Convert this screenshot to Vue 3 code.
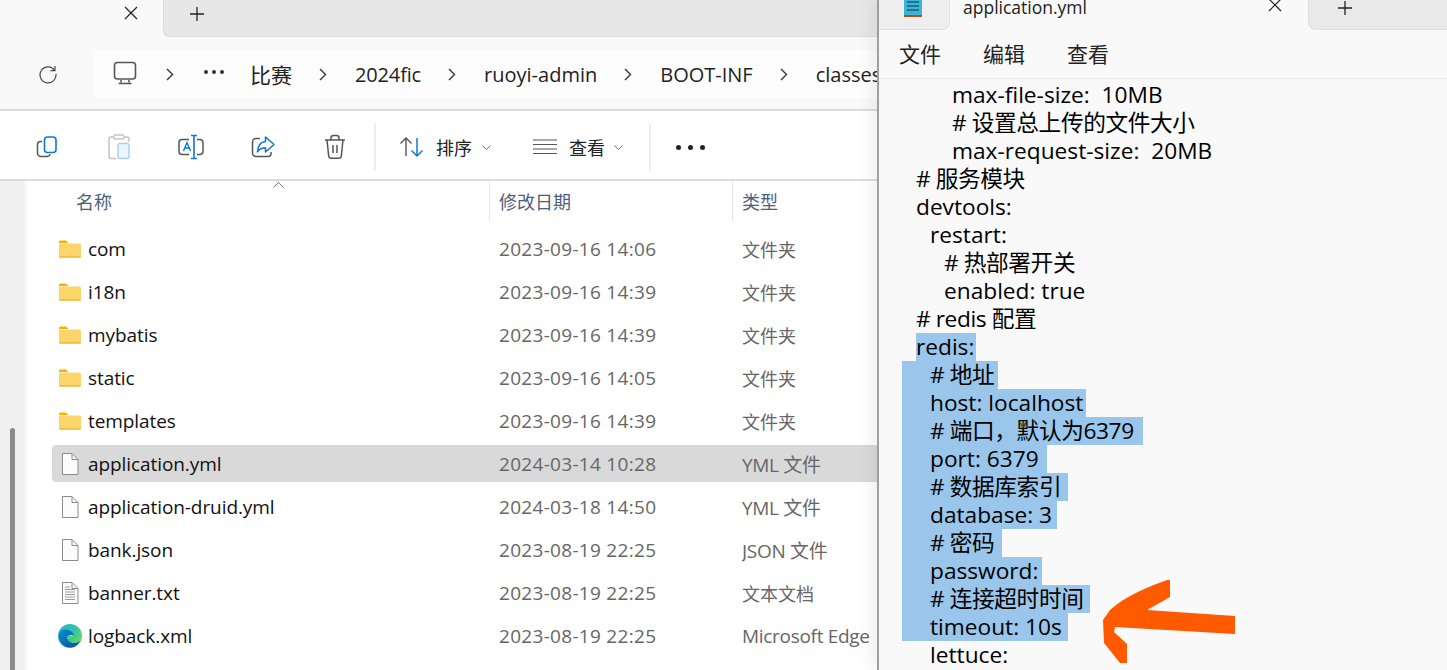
<script setup>
const crumbs = [
  { t: '比赛', cls: 'c1' },
  { t: '2024fic', cls: 'c2' },
  { t: 'ruoyi-admin', cls: 'c3' },
  { t: 'BOOT-INF', cls: 'c4' }
]
const files = [
  { n: 'com', d: '2023-09-16 14:06', k: '文件夹', i: 'folder' },
  { n: 'i18n', d: '2023-09-16 14:39', k: '文件夹', i: 'folder' },
  { n: 'mybatis', d: '2023-09-16 14:39', k: '文件夹', i: 'folder' },
  { n: 'static', d: '2023-09-16 14:05', k: '文件夹', i: 'folder' },
  { n: 'templates', d: '2023-09-16 14:39', k: '文件夹', i: 'folder' },
  { n: 'application.yml', d: '2024-03-14 10:28', k: 'YML 文件', i: 'file', sel: true },
  { n: 'application-druid.yml', d: '2024-03-18 14:50', k: 'YML 文件', i: 'file' },
  { n: 'bank.json', d: '2023-08-19 22:25', k: 'JSON 文件', i: 'file' },
  { n: 'banner.txt', d: '2023-08-19 22:25', k: '文本文档', i: 'txt' },
  { n: 'logback.xml', d: '2023-08-19 22:25', k: 'Microsoft Edge', i: 'edge' }
]
const lines = [
  { t: 'max-file-size:  10MB', x: 50 },
  { t: '# 设置总上传的文件大小', x: 50 },
  { t: 'max-request-size:  20MB', x: 50 },
  { t: '# 服务模块', x: 14 },
  { t: 'devtools:', x: 14 },
  { t: 'restart:', x: 28 },
  { t: '# 热部署开关', x: 42 },
  { t: 'enabled: true', x: 42 },
  { t: '# redis 配置', x: 14 },
  { t: 'redis:', x: 14, end: 74 },
  { t: '# 地址', x: 28, start: 0, end: 96 },
  { t: 'host: localhost', x: 28, start: 0, end: 184 },
  { t: '# 端口，默认为6379', x: 28, start: 0, end: 241 },
  { t: 'port: 6379', x: 28, start: 0, end: 145 },
  { t: '# 数据库索引', x: 28, start: 0, end: 166 },
  { t: 'database: 3', x: 28, start: 0, end: 155 },
  { t: '# 密码', x: 28, start: 0, end: 100 },
  { t: 'password:', x: 28, start: 0, end: 140 },
  { t: '# 连接超时时间', x: 28, start: 0, end: 188 },
  { t: 'timeout: 10s', x: 28, start: 0, end: 166 },
  { t: 'lettuce:', x: 28 }
]
function lineStyle(l) {
  return { paddingLeft: l.x + 'px' }
}
function selStyle(l) {
  const s = l.start === 0 ? 0 : l.x
  return { left: s + 'px', width: l.end - s + 'px' }
}
function hasCjk(t) {
  return /[\u4e00-\u9fff]/.test(t)
}
function onlyCjk(t) {
  return /^[\u4e00-\u9fff]+$/.test(t)
}
</script>

<template>
  <div class="screen">
    <section class="explorer">
      <div class="tabstrip">
        <div class="tab-active">
          <svg class="x" width="14" height="14" viewBox="0 0 14 14"><path d="M1 1l12 12M13 1L1 13" stroke="#222" stroke-width="1.2" fill="none"/></svg>
        </div>
        <div class="tab-rest">
          <svg class="plus" width="16" height="16" viewBox="0 0 16 16"><path d="M8 1v14M1 8h14" stroke="#222" stroke-width="1.3" fill="none"/></svg>
        </div>
      </div>

      <div class="navbar">
        <svg class="refresh" width="20" height="20" viewBox="0 0 20 20"><path d="M16.5 6.2A8 8 0 1 0 18 10" fill="none" stroke="#444" stroke-width="1.2"/><path d="M17 2v4.6h-4.6" fill="none" stroke="#444" stroke-width="1.2"/></svg>
        <div class="address">
          <svg class="pc" width="24" height="24" viewBox="0 0 24 24"><rect x="1.5" y="1.5" width="21" height="16.5" rx="3" fill="none" stroke="#555" stroke-width="1.6"/><path d="M8 19v2.5M16 19v2.5M5.5 22.5h13" stroke="#555" stroke-width="1.5" fill="none"/></svg>
          <svg class="chev first" width="8" height="13" viewBox="0 0 8 13"><path d="M1 1l5.5 5.500L1 12" fill="none" stroke="#333" stroke-width="1.4"/></svg>
          <span class="dots"><i></i><i></i><i></i></span>
          <template v-for="c in crumbs" :key="c.t">
            <span class="crumb" :class="c.cls">{{ c.t }}</span>
            <svg class="chev" width="8" height="13" viewBox="0 0 8 13"><path d="M1 1l5.5 5.500L1 12" fill="none" stroke="#333" stroke-width="1.4"/></svg>
          </template>
          <span class="crumb">classes</span>
        </div>
      </div>

      <div class="cmdbar">
        <button class="cmd">
          <svg width="26" height="26" viewBox="0 0 26 26"><rect x="10.5" y="3" width="11.5" height="15.5" rx="3" fill="none" stroke="#0f78d4" stroke-width="1.6"/><path d="M8 7.5H6.5a3 3 0 0 0-3 3V19a3.5 3.5 0 0 0 3.5 3.5h6a3 3 0 0 0 3-2.5" fill="none" stroke="#555" stroke-width="1.5"/></svg>
        </button>
        <button class="cmd">
          <svg width="26" height="28" viewBox="0 0 26 28"><path d="M8 4H5a2 2 0 0 0-2 2v17a2.5 2.5 0 0 0 2.5 2.5H10M18 4h3a2 2 0 0 1 2 2v3" fill="none" stroke="#c4c4c4" stroke-width="1.5"/><rect x="8" y="2" width="10" height="4" rx="1.5" fill="none" stroke="#c4c4c4" stroke-width="1.4"/><rect x="12" y="10.5" width="11" height="15" rx="2" fill="#eef6fd" stroke="#a6d1f3" stroke-width="1.5"/></svg>
        </button>
        <button class="cmd">
          <svg width="26" height="26" viewBox="0 0 26 26"><path d="M11 5.5H4a3 3 0 0 0-3 3v9a3 3 0 0 0 3 3h7M19 5.500h3a3 3 0 0 1 3 3v9a3 3 0 0 1-3 3h-3" fill="none" stroke="#555" stroke-width="1.5"/><path d="M5.500 17L9 8.500l3.500 8.500M6.800 14h4.400" fill="none" stroke="#0f78d4" stroke-width="1.4"/><path d="M13 1.500h6M13 24.500h6M16 1.500v23" fill="none" stroke="#0f78d4" stroke-width="1.6"/></svg>
        </button>
        <button class="cmd">
          <svg width="26" height="26" viewBox="0 0 26 26"><path d="M10 4.500H6a3.500 3.500 0 0 0-3.500 3.500v11A3.500 3.500 0 0 0 6 22.500h12a3 3 0 0 0 3-3V18" fill="none" stroke="#555" stroke-width="1.500"/><path d="M15.500 3l8.500 7.500-8.500 7.500v-4.200c-3.500 0-6 1-8 4 .3-5.500 3-9.800 8-10.300z" fill="#fff" stroke="#0f78d4" stroke-width="1.600" stroke-linejoin="round"/></svg>
        </button>
        <button class="cmd">
          <svg width="26" height="26" viewBox="0 0 26 26"><path d="M3 6h20M9 6V4a2.500 2.500 0 0 1 2.500-2.500h3A2.500 2.500 0 0 1 17 4v2M5 6l1.700 16a2.500 2.500 0 0 0 2.500 2.300h7.600a2.500 2.500 0 0 0 2.500-2.300L21 6M11 11v8M15 11v8" fill="none" stroke="#555" stroke-width="1.500"/></svg>
        </button>
        <span class="vsep s1"></span>
        <svg class="sort" width="26" height="22" viewBox="0 0 26 22"><path d="M7 20V2M1.500 7.500L7 2l5.500 5.500" fill="none" stroke="#555" stroke-width="1.400"/><path d="M18 2v18M12.500 14.500L18 20l5.500-5.500" fill="none" stroke="#0f78d4" stroke-width="1.500"/></svg>
        <span class="cmdtext sorttext">排序</span>
        <svg class="caret c-a" width="9" height="5" viewBox="0 0 9 5"><path d="M.5.5l4 4 4-4" fill="none" stroke="#777"/></svg>
        <svg class="lines" width="24" height="16" viewBox="0 0 24 16"><path d="M0 1h24M0 5.500h24M0 10h24M0 14.500h24" stroke="#555" stroke-width="1.200"/></svg>
        <span class="cmdtext viewtext">查看</span>
        <svg class="caret c-b" width="9" height="5" viewBox="0 0 9 5"><path d="M.5.5l4 4 4-4" fill="none" stroke="#777"/></svg>
        <span class="vsep s2"></span>
        <span class="more"><i></i><i></i><i></i></span>
      </div>

      <div class="body">
        <aside class="side"><div class="thumb"></div></aside>
        <div class="main">
          <svg class="sortup" width="11" height="6" viewBox="0 0 11 6"><path d="M.5 5.500l5-5 5 5" fill="none" stroke="#777"/></svg>
          <div class="thead">
            <span class="th th-n">名称</span>
            <span class="th th-d">修改日期</span>
            <span class="th th-k">类型</span>
          </div>
          <div class="rows">
            <div v-for="f in files" :key="f.n" class="row" :class="{ sel: f.sel }">
              <span class="ic">
                <svg v-if="f.i === 'folder'" width="22" height="18" viewBox="0 0 22 18"><path d="M0 2a1.500 1.500 0 0 1 1.500-1.500H7l2.500 2.500H0z" fill="#f5b400"/><path d="M0 3.500h20.500A1.500 1.500 0 0 1 22 5v11a1.500 1.500 0 0 1-1.500 1.500h-19A1.500 1.500 0 0 1 0 16z" fill="#fcd56a"/><path d="M0 16.500h22v0.000a1 1 0 0 1-1 1H1a1 1 0 0 1-1-1z" fill="#eaa715"/></svg>
                <svg v-else-if="f.i === 'file'" width="18" height="22" viewBox="0 0 18 22"><path d="M1.500.5H11L17 6.500v15H1.500z" fill="#fcfcfc" stroke="#8c8c8c"/><path d="M11 .5v6h6" fill="none" stroke="#8c8c8c"/></svg>
                <svg v-else-if="f.i === 'txt'" width="18" height="22" viewBox="0 0 18 22"><path d="M1.500.5H11L17 6.500v15H1.500z" fill="#fcfcfc" stroke="#8c8c8c"/><path d="M11 .5v6h6" fill="none" stroke="#8c8c8c"/><path d="M4 5h5M4 7.500h10M4 10h10M4 12.500h10M4 15h10M4 17.500h10" stroke="#9a9a9a"/></svg>
                <svg v-else width="24" height="24" viewBox="0 0 24 24">
                  <defs>
                    <linearGradient id="e1" x1="0" y1="0" x2="1" y2="0.700"><stop offset="0" stop-color="#1eb4d8"/><stop offset="0.600" stop-color="#35c1a5"/><stop offset="1" stop-color="#6fdc5b"/></linearGradient>
                    <linearGradient id="e2" x1="0" y1="0" x2="1" y2="1"><stop offset="0" stop-color="#0f8ad0"/><stop offset="1" stop-color="#0b4fa0"/></linearGradient>
                  </defs>
                  <circle cx="12" cy="12" r="12" fill="url(#e1)"/>
                  <path d="M1 10C2.500 5.500 8 4.500 12 6.500c2.500 1.300 4 3.500 3.500 5.500H9c-.5 3 1.500 6.500 6 7 3 .3 5-.5 7-2-2 4-6 7-11 6.500C4.500 23 0 17.500 1 10z" fill="url(#e2)"/>
                  <path d="M9 13.500c1-3 6.500-3 7.500-.5H9z" fill="#fff"/>
                  <path d="M9 12h6.500c.6 0 3-.3 3.500-2.500 1 3-1 5-3 5.500H9z" fill="#44d07e"/>
                </svg>
              </span>
              <span class="name">{{ f.n }}</span>
              <span class="date">{{ f.d }}</span>
              <span class="kind" :class="{ small: onlyCjk(f.k) }">{{ f.k }}</span>
            </div>
          </div>
        </div>
      </div>
    </section>

    <section class="notepad">
      <div class="np-tabs">
        <div class="np-left">
          <svg width="18" height="18" viewBox="0 0 18 18"><rect x="0" y="-2" width="18" height="17" fill="#3cb4d8"/><path d="M3 2h12M3 6h12M3 10h12" stroke="#14607c" stroke-width="1.600"/><rect x="0" y="15" width="18" height="2" fill="#b0500f"/></svg>
        </div>
        <div class="np-active">
          <span class="np-title">application.yml</span>
          <svg class="np-x" width="14" height="14" viewBox="0 0 14 14"><path d="M1 1l12 12M13 1L1 13" stroke="#222" stroke-width="1.200" fill="none"/></svg>
        </div>
        <div class="np-rest">
          <svg width="16" height="16" viewBox="0 0 16 16"><path d="M8 1v14M1 8h14" stroke="#222" stroke-width="1.300" fill="none"/></svg>
        </div>
      </div>
      <nav class="np-menu">
        <span>文件</span><span>编辑</span><span>查看</span>
      </nav>
      <div class="np-text">
        <div v-for="(l, i) in lines" :key="i" class="ln" :style="lineStyle(l)">
          <span v-if="l.end" class="selbg" :style="selStyle(l)"></span>
          <span class="lt" :class="{ cjk: hasCjk(l.t) }">{{ l.t }}</span>
        </div>
      </div>
      <svg class="arrow" width="136" height="88" viewBox="0 0 136 88">
        <path d="M67 0L70 0V17L47 30L135 36V54L15 47L14 52L27 64V83H20L4 63L3 40L10 30C25 16 50 6 67 0z" fill="#ff5a00"/>
      </svg>
    </section>
  </div>
</template>

<style scoped>
.screen {
  width: 1447px;
  height: 670px;
  display: flex;
  overflow: hidden;
  background: #fff;
  font-family: "Open Sans", "Noto Sans CJK SC", sans-serif;
  color: #1a1a1a;
}
button { border: 0; background: none; padding: 0; }
.explorer {
  width: 877px;
  flex: none;
  display: flex;
  flex-direction: column;
  overflow: hidden;
}
.tabstrip { height: 37px; display: flex; background: #f9f9f9; flex: none; }
.tab-active { width: 163px; display: flex; justify-content: flex-end; padding: 6px 25px 0 0; box-sizing: border-box; }
.tab-rest {
  flex: 1;
  background: #e7e7e7;
  border-bottom: 1px solid #dcdcdc;
  border-left: 1px solid #dcdcdc;
  border-bottom-left-radius: 6px;
  padding: 6px 0 0 25px;
  box-sizing: border-box;
}
.x, .plus { display: block; }
.navbar {
  height: 72px;
  flex: none;
  display: flex;
  align-items: flex-start;
  background: #f9f9f9;
  border-bottom: 2px solid #dcdcdc;
  position: relative;
}
.refresh { margin: 27px 0 0 38px; }
.address {
  margin: 13px 0 0 35px;
  flex: 1;
  height: 48px;
  background: #fdfdfd;
  border-radius: 6px 0 0 6px;
  display: flex;
  align-items: center;
  white-space: nowrap;
  padding-left: 20px;
  font-size: 20px;
  overflow: hidden;
}
.pc { flex: none; margin-top: -3px; }
.chev { flex: none; margin: 0 28px 0 27px; }
.chev.first { margin: 0 30px 0 29px; }
.dots { display: flex; gap: 4px; margin-top: -4px; margin-right: 26px; }
.dots i { width: 4px; height: 4px; border-radius: 50%; background: #333; }
.crumb { color: #222; }
.crumb.c1 { font-size: 21px; }
.crumb.c2 { letter-spacing: -0.15px; }
.cmdbar {
  height: 64px;
  padding-top: 4px;
  flex: none;
  background: #fff;
  display: flex;
  align-items: center;
  border-bottom: 2px solid #dcdcdc;
  box-sizing: content-box;
  padding-left: 11px;
}
.cmd { width: 72px; height: 34px; display: flex; align-items: center; justify-content: center; flex: none; }
.vsep { width: 2px; height: 48px; background: #eeeeee; flex: none; }
.s1 { margin-left: 3px; }
.sort { margin-left: 23px; flex: none; }
.cmdtext { font-size: 18px; color: #222; }
.sorttext { margin-left: 11px; }
.caret { flex: none; }
.c-a { margin-left: 10px; }
.lines { margin-left: 42px; flex: none; }
.viewtext { margin-left: 12px; }
.c-b { margin-left: 9px; }
.s2 { margin-left: 26px; }
.more { display: flex; gap: 7px; margin-left: 25px; }
.more i { width: 5px; height: 5px; border-radius: 50%; background: #222; }
.body { flex: 1; display: flex; min-height: 0; }
.side { width: 25px; flex: none; background: #f0f0f0; position: relative; border-right: 3px solid #f9f9f9; }
.thumb { position: absolute; left: 10px; top: 247px; bottom: 0; width: 5px; border-radius: 3px 3px 0 0; background: #8a8a8a; }
.main { flex: 1; position: relative; min-width: 0; }
.sortup { position: absolute; left: 245px; top: 1px; }
.thead { height: 40px; display: flex; align-items: center; font-size: 18px; color: #4c607a; }
.th { height: 40px; display: flex; align-items: center; box-sizing: border-box; }
.th-n { width: 461px; padding-left: 48px; }
.th-d { width: 243px; padding-left: 9px; border-left: 1px solid #e5e5e5; }
.th-k { flex: 1; padding-left: 9px; border-left: 1px solid #e5e5e5; }
.rows { margin: 9px 0 0 24px; display: flex; flex-direction: column; gap: 6px; }
.row {
  height: 37px;
  display: grid;
  grid-template-columns: 36px 411px 243px 1fr;
  align-items: center;
  border-radius: 4px 0 0 4px;
  font-size: 19px;
  white-space: nowrap;
}
.row.sel { background: #d9d9d9; }
.ic { display: flex; align-items: center; justify-content: center; padding-right: 1px; }
.ic svg { display: block; }
.name { color: #111; letter-spacing: -0.08px; }
.date { color: #666; letter-spacing: 0.3px; }
.kind { color: #666; overflow: hidden; letter-spacing: -0.3px; }
.kind.small { font-size: 18px; letter-spacing: 0; }

.notepad {
  flex: 1;
  min-width: 0;
  position: relative;
  background: #f9f9f9;
  border-left: 2px solid #9f9f9f;
  box-shadow: -8px 0 12px rgba(0,0,0,.05);
  display: flex;
  flex-direction: column;
  overflow: hidden;
  z-index: 1;
}
.np-tabs { height: 30px; display: flex; flex: none; }
.np-left { width: 71px; box-sizing: border-box; background: #eeeeee; border-bottom-right-radius: 8px; border-bottom: 1px solid #e0e0e0; border-right: 1px solid #e0e0e0; padding-left: 25px; }
.np-left svg { display: block; }
.np-active { width: 358px; display: flex; align-items: flex-start; position: relative; }
.np-title { font-size: 17.5px; line-height: 14px; color: #222; margin-left: 13px; font-weight: 500; }
.np-x { position: absolute; left: 318px; top: -2px; }
.np-rest {
  flex: 1;
  background: #e9e9e9;
  border-bottom-left-radius: 8px;
  border-bottom: 1px solid #dedede;
  border-left: 1px solid #dedede;
  padding-left: 28px;
}
.np-rest svg { display: block; margin-top: 0; }
.np-menu {
  height: 49px;
  flex: none;
  display: flex;
  align-items: center;
  gap: 42px;
  padding: 0 0 2px 20px;
  font-size: 21px;
  color: #222;
  border-bottom: 1px solid #e8e8e8;
  box-sizing: border-box;
}
.np-text { padding-top: 2px; font-size: 22.7px; color: #000; }
.ln {
  height: 28px;
  line-height: 28px;
  margin-left: 23px;
  position: relative;
  white-space: pre;
}
.selbg { position: absolute; top: 0; bottom: 0; background: #99c6ea; }
.lt { position: relative; }
.lt.cjk { letter-spacing: -0.4px; }
.arrow { position: absolute; left: 221px; top: 580px; }
</style>

<style>
html, body { margin: 0; overflow: hidden; background: #fff; }
</style>
